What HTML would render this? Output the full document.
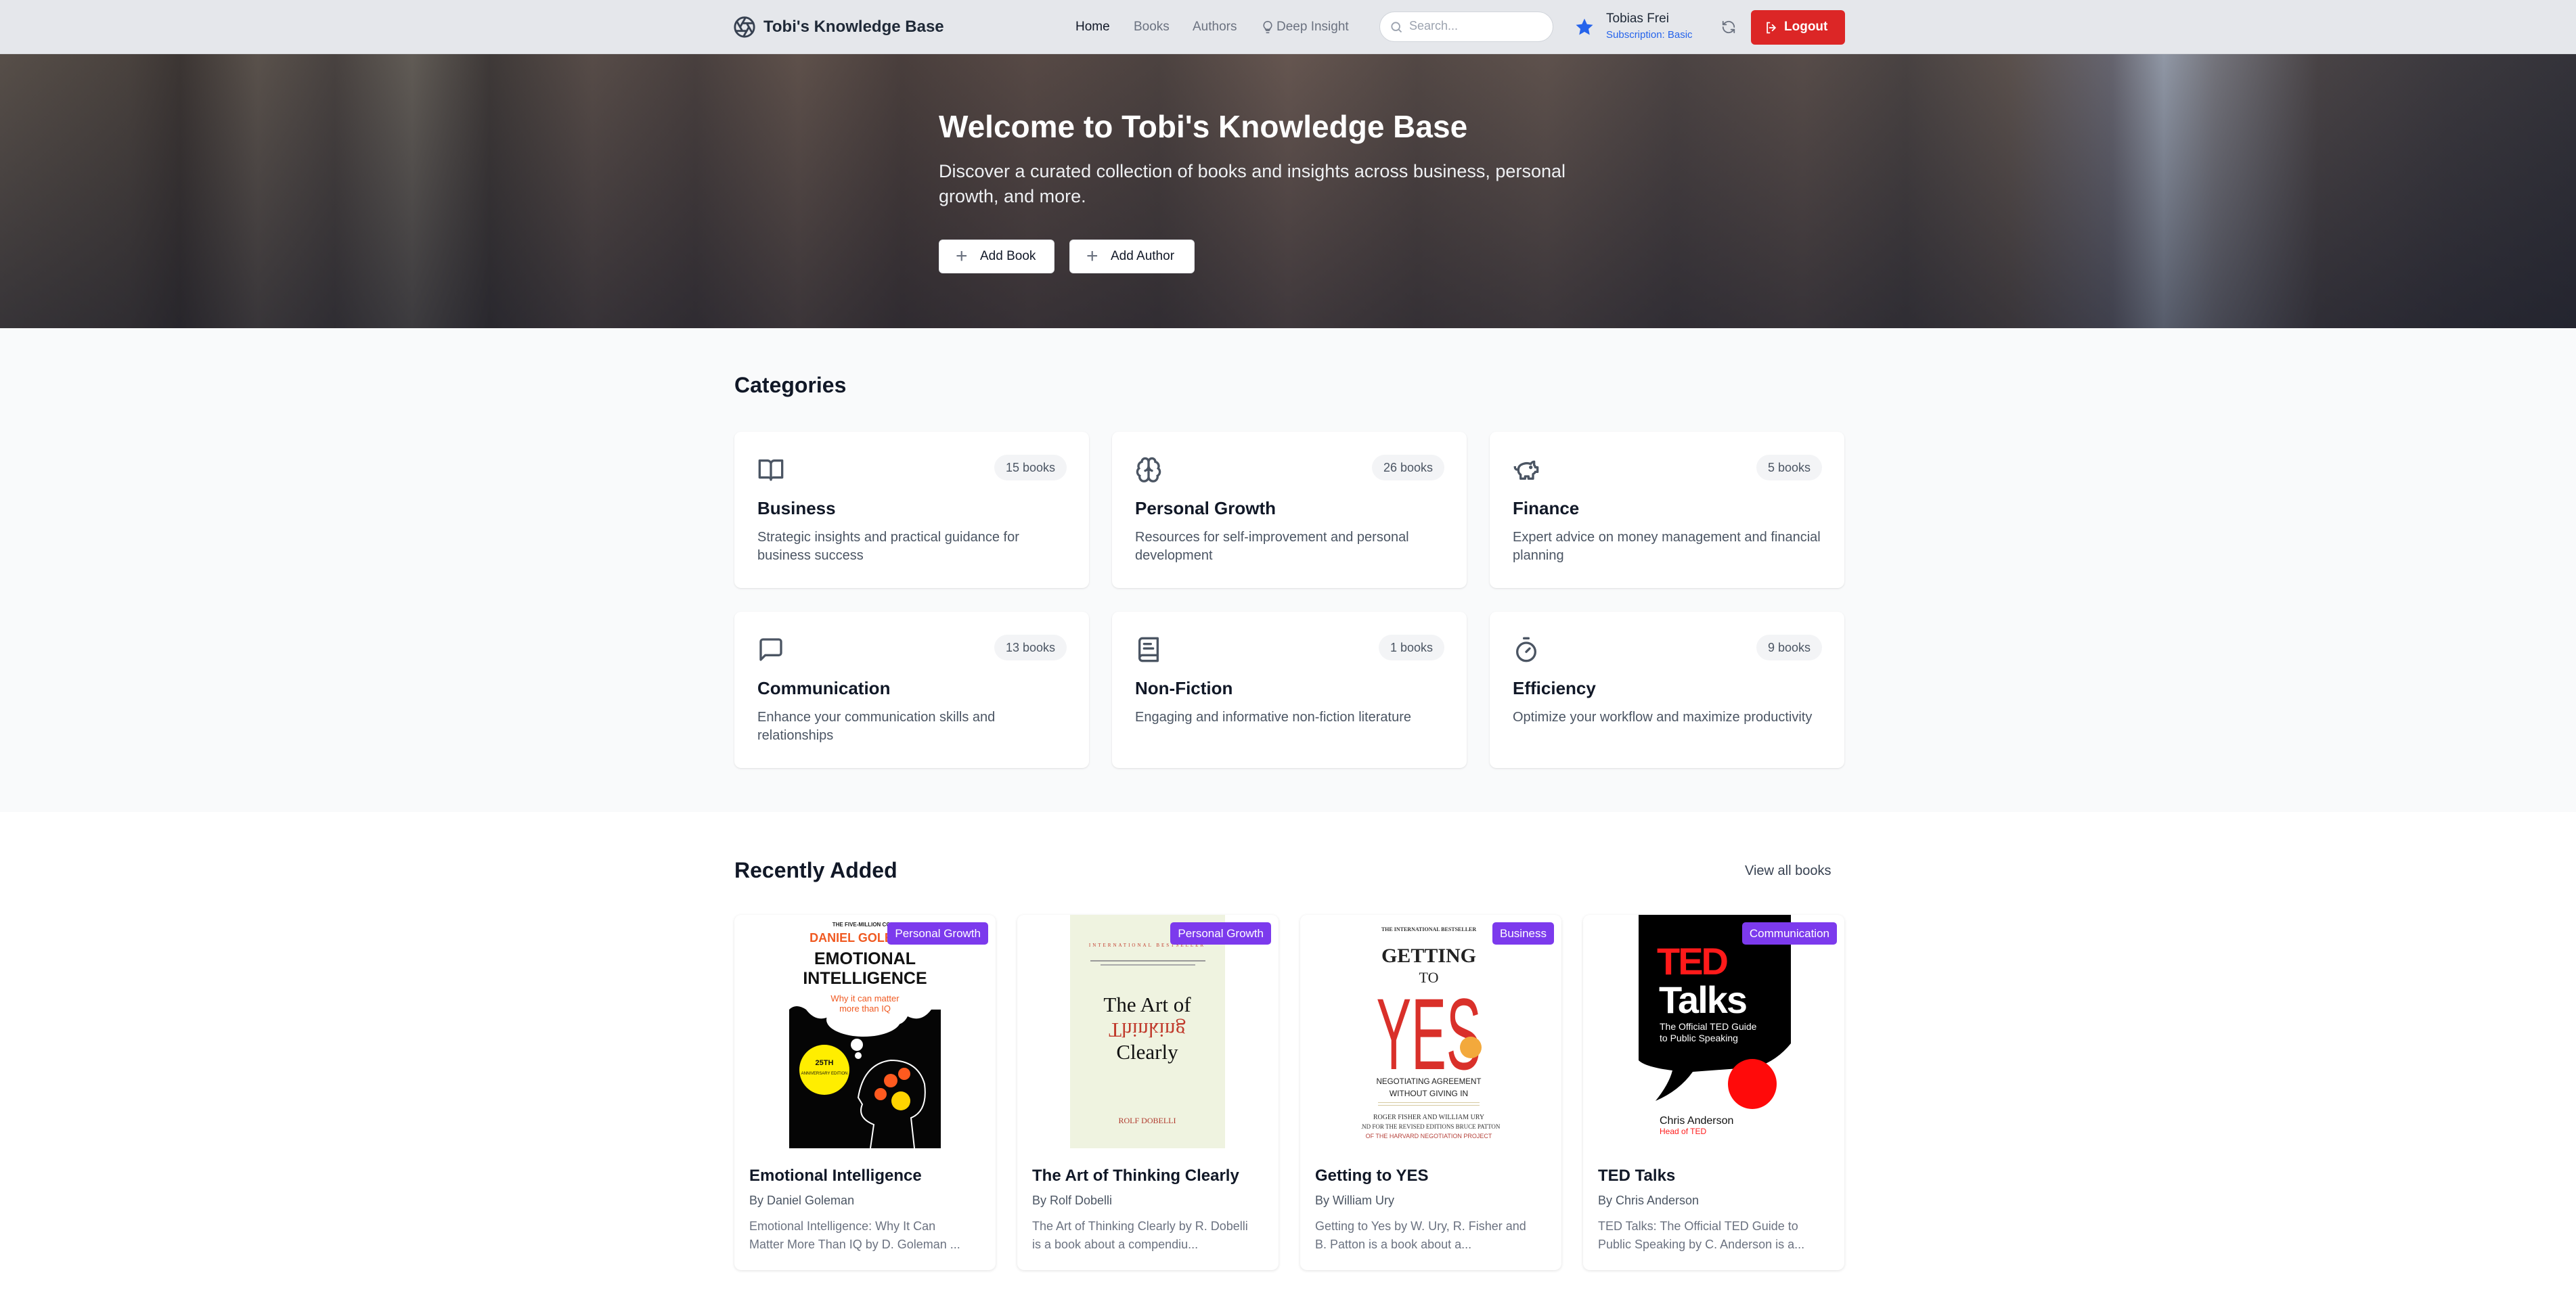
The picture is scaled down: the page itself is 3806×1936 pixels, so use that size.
<!DOCTYPE html>
<html><head><meta charset="utf-8"><style>
*{margin:0;padding:0;box-sizing:border-box}
body{width:3806px;height:1936px;overflow:hidden;font-family:"Liberation Sans",sans-serif;background:#fff;position:relative;color:#111827}
.a{position:absolute}
.nav{left:0;top:0;width:3806px;height:80px;background:#e5e7eb;border-bottom:1px solid #d8dade}
.hero{left:0;top:80px;width:3806px;height:405px;overflow:hidden;
background:
linear-gradient(180deg,rgba(60,50,45,.1),rgba(20,22,35,.5)),
linear-gradient(90deg,#5a524c 0%,#4b4440 5%,#3c3634 7%,#5d554f 10%,#4a4442 13%,#65605a 16%,#3f3a39 19%,#5a4f4b 23%,#4a4140 27%,#62544e 31%,#4b403e 35%,#5a4c48 40%,#4e4442 45%,#6a5a54 50%,#554a47 55%,#625550 60%,#4d4545 65%,#5a4f4c 70%,#4a4444 74%,#5e5450 78%,#6a6a76 82%,#9aa3b3 84%,#7a7b84 86%,#4a4548 90%,#3c3a40 95%,#33333b 100%)}
.cat{left:0;top:485px;width:3806px;height:715px;background:#f9fafb}
.card{position:absolute;width:524px;height:231px;background:#fff;border-radius:10px;box-shadow:0 1px 3px rgba(0,0,0,.08),0 1px 2px rgba(0,0,0,.04)}
.card .ic{position:absolute;left:34px;top:36px;width:40px;height:40px}
.card .bd{position:absolute;right:33px;top:34px;height:38px;line-height:38px;padding:0 17px;border-radius:19px;background:#f3f4f6;color:#4b5563;font-size:18px}
.card .t{position:absolute;left:34px;top:98px;font-size:26px;font-weight:600;color:#111827}
.card .d{position:absolute;left:34px;top:143px;width:458px;font-size:20px;line-height:27px;color:#4b5563}
.bk{position:absolute;top:1352px;width:386px;height:525px;background:#fff;border-radius:10px;box-shadow:0 1px 4px rgba(0,0,0,.12);overflow:hidden}
.bk .tag{position:absolute;right:11px;top:11px;height:33px;line-height:33px;padding:0 11px;background:#7c3aed;color:#fff;font-size:17px;border-radius:5px}
.bk .tt{position:absolute;left:22px;top:372px;font-size:24px;font-weight:600;color:#111827}
.bk .by{position:absolute;left:22px;top:412px;font-size:18px;color:#4b5563}
.bk .ds{position:absolute;left:22px;top:447px;width:322px;font-size:18px;line-height:27px;color:#6b7280}
.btn{position:absolute;top:274px;height:50px;background:#fff;border-radius:6px;border:1px solid #e5e7eb;font-size:19px;color:#111827;line-height:48px;padding-left:60px}
.btn:before{content:"+";position:absolute;left:24px;top:0;font-size:30px;color:#6b7280;font-weight:300}
</style></head><body>
<div class="a nav">
 <svg class="a" style="left:1083px;top:23px" width="34" height="34" viewBox="0 0 24 24" fill="none" stroke="#374151" stroke-width="2" stroke-linecap="round"><circle cx="12" cy="12" r="10"/><path d="M14.3 8l5.7 9.9M9.7 8h11.5M7.4 12l5.7-9.9M9.7 16L4 6.1M14.3 16H2.8M16.6 12l-5.7 9.9"/></svg>
 <div class="a" style="left:1128px;top:26px;font-size:24px;font-weight:600;color:#1f2937">Tobi's Knowledge Base</div>
 <div class="a" style="left:1589px;top:29px;font-size:19px;color:#111827">Home</div>
 <div class="a" style="left:1675px;top:29px;font-size:19px;color:#6b7280">Books</div>
 <div class="a" style="left:1762px;top:29px;font-size:19px;color:#6b7280">Authors</div>
 <svg class="a" style="left:1863px;top:28px" width="20" height="24" viewBox="0 0 24 24" fill="none" stroke="#6b7280" stroke-width="2" stroke-linecap="round"><path d="M9 18h6M10 22h4M12 2a7 7 0 0 0-4 12.7V16h8v-1.3A7 7 0 0 0 12 2z"/></svg>
 <div class="a" style="left:1886px;top:29px;font-size:19px;color:#6b7280">Deep Insight</div>
 <div class="a" style="left:2038px;top:17px;width:257px;height:45px;background:#fff;border:1px solid #d1d5db;border-radius:23px"></div>
 <svg class="a" style="left:2053px;top:30px" width="20" height="20" viewBox="0 0 24 24" fill="none" stroke="#9ca3af" stroke-width="2.2"><circle cx="11" cy="11" r="7"/><path d="M21 21l-5-5"/></svg>
 <div class="a" style="left:2082px;top:28px;font-size:18px;color:#9ca3af">Search...</div>
 <svg class="a" style="left:2326px;top:25px" width="30" height="30" viewBox="0 0 24 24"><path d="M12 2l3 6.6 7 .8-5.2 4.8 1.4 7L12 17.6 5.8 21.2l1.4-7L2 9.4l7-.8z" fill="#2563eb"/></svg>
 <div class="a" style="left:2373px;top:17px;font-size:19px;color:#1f2937">Tobias Frei</div>
 <div class="a" style="left:2373px;top:43px;font-size:15px;color:#2563eb">Subscription: Basic</div>
 <svg class="a" style="left:2543px;top:29px" width="22" height="22" viewBox="0 0 24 24" fill="none" stroke="#6b7280" stroke-width="2" stroke-linecap="round"><path d="M21 12a9 9 0 0 0-15.5-6.2L3 8M3 3v5h5M3 12a9 9 0 0 0 15.5 6.2L21 16M21 21v-5h-5"/></svg>
 <div class="a" style="left:2587px;top:15px;width:139px;height:51px;background:#dc2626;border-radius:6px"></div>
 <svg class="a" style="left:2607px;top:31px" width="20" height="20" viewBox="0 0 24 24" fill="none" stroke="#fff" stroke-width="2.2" stroke-linecap="round"><path d="M9 3H5v18h4M14 7l5 5-5 5M19 12H9"/></svg>
 <div class="a" style="left:2636px;top:29px;font-size:19px;color:#fff;font-weight:600">Logout</div>
</div>
<div class="a hero">
 <div class="a" style="left:1387px;top:80px;font-size:46px;font-weight:700;color:#fff">Welcome to Tobi's Knowledge Base</div>
 <div class="a" style="left:1387px;top:155px;width:1010px;font-size:27px;line-height:37px;color:#eef0f3">Discover a curated collection of books and insights across business, personal growth, and more.</div>
 <div class="btn" style="left:1387px;width:171px">Add Book</div>
 <div class="btn" style="left:1580px;width:185px">Add Author</div>
</div>
<div class="a cat"></div>
<div class="a" style="left:1085px;top:551px;font-size:32px;font-weight:700;color:#111827">Categories</div>

<div class="card" style="left:1085px;top:638px">
 <svg class="ic" viewBox="0 0 24 24" fill="none" stroke="#4b5563" stroke-width="2" stroke-linejoin="round"><path d="M2 4h7a3 3 0 0 1 3 3v14a2 2 0 0 0-2-2H2zM22 4h-7a3 3 0 0 0-3 3v14a2 2 0 0 1 2-2h8z"/></svg>
 <div class="bd">15 books</div><div class="t">Business</div><div class="d">Strategic insights and practical guidance for business success</div></div>
<div class="card" style="left:1643px;top:638px">
 <svg class="ic" viewBox="0 0 24 24" fill="none" stroke="#4b5563" stroke-width="2" stroke-linecap="round"><path d="M12 5a3 3 0 1 0-6 .1 4 4 0 0 0-2.5 5.8 4 4 0 0 0 .6 6.6A4 4 0 1 0 12 18zM12 5a3 3 0 1 1 6 .1 4 4 0 0 1 2.5 5.8 4 4 0 0 1-.6 6.6A4 4 0 1 1 12 18zM12 5v13M9 13a4.5 4.5 0 0 0 3-4M15 13a4.5 4.5 0 0 1-3-4"/></svg>
 <div class="bd">26 books</div><div class="t">Personal Growth</div><div class="d">Resources for self-improvement and personal development</div></div>
<div class="card" style="left:2201px;top:638px">
 <svg class="ic" viewBox="0 0 24 24" fill="none" stroke="#4b5563" stroke-width="2" stroke-linejoin="round"><path d="M19 5c-1.5 0-2.8 1.4-3 2-3.5-1.5-11-.3-11 5 0 1.8 0 3 2 4.5V20h4v-2h3v2h4v-4c1-.5 1.7-1 2-2h2v-4h-2c0-1-.5-1.5-1-2zM2 9v1c0 1.1.9 2 2 2h1"/><circle cx="16" cy="10" r=".6" fill="#4b5563"/></svg>
 <div class="bd">5 books</div><div class="t">Finance</div><div class="d">Expert advice on money management and financial planning</div></div>
<div class="card" style="left:1085px;top:904px">
 <svg class="ic" viewBox="0 0 24 24" fill="none" stroke="#4b5563" stroke-width="2" stroke-linejoin="round"><path d="M21 15a2 2 0 0 1-2 2H7l-4 4V5a2 2 0 0 1 2-2h14a2 2 0 0 1 2 2z"/></svg>
 <div class="bd">13 books</div><div class="t">Communication</div><div class="d">Enhance your communication skills and relationships</div></div>
<div class="card" style="left:1643px;top:904px">
 <svg class="ic" viewBox="0 0 24 24" fill="none" stroke="#4b5563" stroke-width="2" stroke-linecap="round" stroke-linejoin="round"><path d="M4 19.5v-15A2.5 2.5 0 0 1 6.5 2H20v20H6.5a2.5 2.5 0 0 1 0-5H20M8 7h6M8 11h8"/></svg>
 <div class="bd">1 books</div><div class="t">Non-Fiction</div><div class="d">Engaging and informative non-fiction literature</div></div>
<div class="card" style="left:2201px;top:904px">
 <svg class="ic" viewBox="0 0 24 24" fill="none" stroke="#4b5563" stroke-width="2" stroke-linecap="round"><path d="M10 2h4M12 14l3-3"/><circle cx="12" cy="14" r="8"/></svg>
 <div class="bd">9 books</div><div class="t">Efficiency</div><div class="d">Optimize your workflow and maximize productivity</div></div>

<div class="a" style="left:1085px;top:1268px;font-size:32px;font-weight:700;color:#111827">Recently Added</div>
<div class="a" style="left:2578px;top:1276px;font-size:20px;color:#374151">View all books</div>

<div class="bk" style="left:1085px">
 <svg class="a" style="left:81px;top:0" width="224" height="345" viewBox="0 0 224 345">
  <rect width="224" height="345" fill="#fff"/>
  <path d="M0 140 Q10 130 25 140 Q40 160 60 150 Q80 175 100 160 Q120 180 140 158 Q165 170 175 150 Q195 160 210 140 L224 140 V345 H0Z" fill="#050505"/>
  <ellipse cx="110" cy="155" rx="55" ry="25" fill="#fff"/><circle cx="100" cy="192" r="9" fill="#fff"/><circle cx="102" cy="208" r="5" fill="#fff"/>
  <circle cx="52" cy="229" r="37" fill="#ffee00"/>
  <path d="M120 345 L125 310 Q100 300 108 280 L102 270 Q110 220 150 215 Q190 215 200 250 Q205 290 180 300 L185 345" fill="none" stroke="#fff" stroke-width="2"/>
  <circle cx="150" cy="245" r="10" fill="#ff5a1f"/><circle cx="170" cy="235" r="9" fill="#ff5a1f"/><circle cx="135" cy="265" r="9" fill="#ff5a1f"/><circle cx="165" cy="275" r="14" fill="#ffd400"/>
  <text x="112" y="17" font-size="8" font-weight="700" text-anchor="middle" fill="#222">THE FIVE-MILLION COPY</text>
  <text x="112" y="40" font-size="18" font-weight="700" text-anchor="middle" fill="#f05a22">DANIEL GOLEMAN</text>
  <text x="112" y="73" font-size="25" font-weight="700" text-anchor="middle" fill="#111">EMOTIONAL</text>
  <text x="112" y="102" font-size="25" font-weight="700" text-anchor="middle" fill="#111">INTELLIGENCE</text>
  <text x="112" y="128" font-size="13" text-anchor="middle" fill="#f05a22">Why it can matter</text>
  <text x="112" y="143" font-size="13" text-anchor="middle" fill="#f05a22">more than IQ</text>
  <text x="52" y="222" font-size="11" font-weight="700" text-anchor="middle" fill="#111">25TH</text>
  <text x="52" y="236" font-size="6" text-anchor="middle" fill="#111">ANNIVERSARY EDITION</text>
 </svg>
 <div class="tag">Personal Growth</div>
 <div class="tt">Emotional Intelligence</div><div class="by">By Daniel Goleman</div>
 <div class="ds">Emotional Intelligence: Why It Can Matter More Than IQ by D. Goleman ...</div></div>

<div class="bk" style="left:1503px">
 <svg class="a" style="left:78px;top:0" width="229" height="345" viewBox="0 0 229 345">
  <rect width="229" height="345" fill="#eff3e0"/>
  <text x="114" y="47" font-size="7" font-family="Liberation Serif" letter-spacing="3" text-anchor="middle" fill="#c0392b">INTERNATIONAL BESTSELLER</text>
  <rect x="30" y="67" width="170" height="2" fill="#999"/><rect x="45" y="73" width="140" height="2" fill="#aaa"/>
  <text x="114" y="143" font-size="31" font-family="Liberation Serif" text-anchor="middle" fill="#111">The Art of</text>
  <text transform="translate(114,160) scale(1,-1)" font-size="31" font-family="Liberation Serif" text-anchor="middle" fill="#c0392b">Thinking</text>
  <text x="114" y="213" font-size="31" font-family="Liberation Serif" text-anchor="middle" fill="#111">Clearly</text>
  <text x="114" y="308" font-size="12" font-family="Liberation Serif" text-anchor="middle" fill="#b03a2e">ROLF DOBELLI</text>
 </svg>
 <div class="tag">Personal Growth</div>
 <div class="tt">The Art of Thinking Clearly</div><div class="by">By Rolf Dobelli</div>
 <div class="ds">The Art of Thinking Clearly by R. Dobelli is a book about a compendiu...</div></div>

<div class="bk" style="left:1921px">
 <svg class="a" style="left:90px;top:0" width="210" height="345" viewBox="0 0 210 345">
  <text x="100" y="24" font-size="8" font-weight="700" font-family="Liberation Serif" text-anchor="middle" fill="#333">THE INTERNATIONAL BESTSELLER</text>
  <text x="100" y="70" font-size="30" font-weight="700" font-family="Liberation Serif" text-anchor="middle" fill="#222">GETTING</text>
  <text x="100" y="100" font-size="22" font-family="Liberation Serif" text-anchor="middle" fill="#222">TO</text>
  <text x="100" y="228" font-size="150" font-family="Liberation Sans Narrow, Liberation Sans" text-anchor="middle" fill="#d9302a" textLength="155" lengthAdjust="spacingAndGlyphs">YES</text>
  <circle cx="162" cy="196" r="16" fill="#f3a93c"/>
  <text x="100" y="250" font-size="12" text-anchor="middle" fill="#222" textLength="155" lengthAdjust="spacingAndGlyphs">NEGOTIATING AGREEMENT</text>
  <text x="100" y="268" font-size="12" text-anchor="middle" fill="#222">WITHOUT GIVING IN</text>
  <rect x="25" y="277" width="150" height="1" fill="#d6c9a0"/><rect x="25" y="281" width="150" height="1" fill="#d6c9a0"/>
  <text x="100" y="302" font-size="10" font-family="Liberation Serif" text-anchor="middle" fill="#333">ROGER FISHER AND WILLIAM URY</text>
  <text x="100" y="316" font-size="9" font-family="Liberation Serif" text-anchor="middle" fill="#333">AND FOR THE REVISED EDITIONS BRUCE PATTON</text>
  <text x="100" y="330" font-size="9" text-anchor="middle" fill="#b5413a">OF THE HARVARD NEGOTIATION PROJECT</text>
 </svg>
 <div class="tag">Business</div>
 <div class="tt">Getting to YES</div><div class="by">By William Ury</div>
 <div class="ds">Getting to Yes by W. Ury, R. Fisher and B. Patton is a book about a...</div></div>

<div class="bk" style="left:2339px">
 <svg class="a" style="left:82px;top:0" width="225" height="345" viewBox="0 0 225 345">
  <path d="M0 0H225V190 Q205 215 175 225 L80 232 Q60 260 25 275 Q45 250 50 230 Q10 225 0 215Z" fill="#000"/>
  <text x="27" y="88" font-size="56" font-weight="700" fill="#ff1a1a" letter-spacing="-3">TED</text>
  <text x="30" y="145" font-size="56" font-weight="700" fill="#fff" letter-spacing="-2">Talks</text>
  <text x="31" y="170" font-size="14" fill="#fff">The Official TED Guide</text>
  <text x="31" y="187" font-size="14" fill="#fff">to Public Speaking</text>
  <ellipse cx="168" cy="250" rx="36" ry="37" fill="#ff0a0a"/>
  <text x="31" y="309" font-size="16" fill="#111">Chris Anderson</text>
  <text x="31" y="324" font-size="12" fill="#ff1a1a">Head of TED</text>
 </svg>
 <div class="tag">Communication</div>
 <div class="tt">TED Talks</div><div class="by">By Chris Anderson</div>
 <div class="ds">TED Talks: The Official TED Guide to Public Speaking by C. Anderson is a...</div></div>
</body></html>
